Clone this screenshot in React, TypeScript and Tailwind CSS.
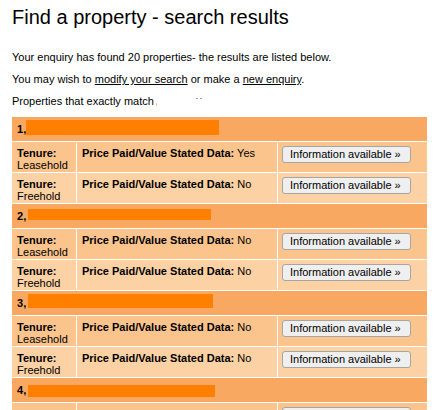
import React from 'react';

type Row = { tenure: string; stated: string };
type Group = { n: number; box: { w: number; h: number; top: number; ml: number }; rows: Row[] };

const groups: Group[] = [
  { n: 1, box: { w: 193, h: 15, top: 3, ml: 0 }, rows: [{ tenure: 'Leasehold', stated: 'Yes' }, { tenure: 'Freehold', stated: 'No' }] },
  { n: 2, box: { w: 183, h: 11, top: 5, ml: 2 }, rows: [{ tenure: 'Leasehold', stated: 'No' }, { tenure: 'Freehold', stated: 'No' }] },
  { n: 3, box: { w: 185, h: 14, top: 3, ml: 2 }, rows: [{ tenure: 'Leasehold', stated: 'No' }, { tenure: 'Freehold', stated: 'No' }] },
  { n: 4, box: { w: 187, h: 12, top: 7, ml: 2 }, rows: [{ tenure: 'Leasehold', stated: 'No' }, { tenure: 'Freehold', stated: 'No' }] },
];

const SearchResults: React.FC = () => {
  return (
    <div className="min-h-screen bg-white text-black pl-[12px] font-['Liberation_Sans',Arial,sans-serif]">
      <h1 className="pt-[6px] text-[20px] leading-[23px] font-normal">Find a property - search results</h1>

      <p className="mt-[22px] text-[11px] leading-[13px]">Your enquiry has found 20 properties- the results are listed below.</p>
      <p className="mt-[9px] text-[11px] leading-[13px]">
        You may wish to <a className="underline cursor-pointer">modify your search</a> or make a{' '}
        <a className="underline cursor-pointer">new enquiry</a>.
      </p>
      <p className="mt-[9px] text-[11px] leading-[13px] flex items-start">
        <span>Properties that exactly match</span>
        <span className="ml-[2px] mt-[8px] w-[1px] h-[3px] bg-[#fbc48d]" />
        <span className="ml-[39px] mt-[3px] w-[2px] h-[1px] bg-[#9a9ab0]" />
        <span className="ml-[2px] mt-[3px] w-[2px] h-[1px] bg-[#9a9ab0]" />
      </p>

      <table className="mt-[8px] -ml-px w-[417px] table-fixed border-separate border-spacing-[1px] text-[11px] leading-[12px]">
        <colgroup>
          <col className="w-[64px]" />
          <col className="w-[200px]" />
          <col className="w-[149px]" />
        </colgroup>
        <tbody>
          {groups.map((g) => (
            <React.Fragment key={g.n}>
              <tr>
                <td colSpan={3} className="h-[24px] p-0 pl-[5px] bg-[#f9a862]">
                  <div className="flex h-[24px] items-center">
                    <b>{g.n},</b>
                    <span
                      className="self-start bg-[#ff8000]"
                      style={{ width: g.box.w, height: g.box.h, marginTop: g.box.top, marginLeft: g.box.ml }}
                    />
                  </div>
                </td>
              </tr>
              {g.rows.map((r, i) => (
                <tr key={i} className={i === 0 ? 'bg-[#fbc48d]' : 'bg-[#fcd1a3]'}>
                  <td className="h-[30px] align-top px-[5px] pt-[5px] pb-0">
                    <b>Tenure:</b>
                    <br />
                    {r.tenure}
                  </td>
                  <td className="h-[30px] align-top px-[5px] pt-[5px] pb-0">
                    <b>Price Paid/Value Stated Data:</b> {r.stated}
                  </td>
                  <td className="h-[30px] align-top pl-[4px] pt-[4px] pb-0">
                    <button className="w-[129px] h-[17px] pl-[7px] text-left text-[11px] leading-[15px] bg-[#efefef] border border-[#a5a5a5] rounded-[3px] text-black">
                      Information available »
                    </button>
                  </td>
                </tr>
              ))}
            </React.Fragment>
          ))}
        </tbody>
      </table>
    </div>
  );
};

export default SearchResults;
